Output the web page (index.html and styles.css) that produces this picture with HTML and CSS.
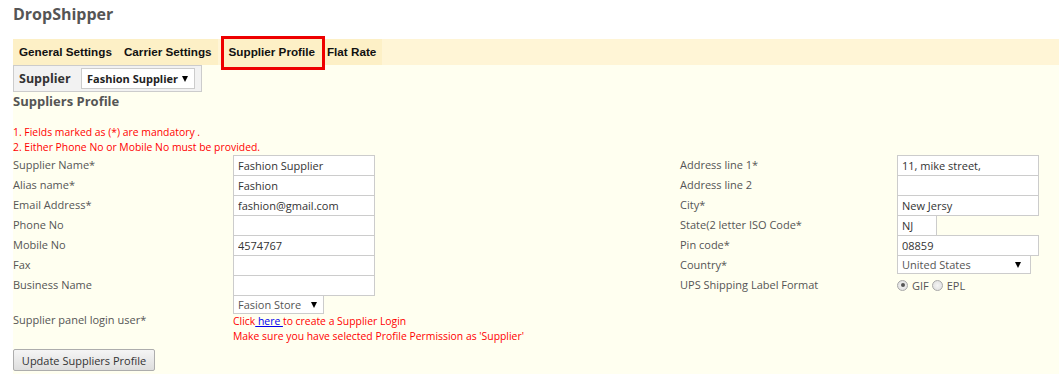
FILE: index.html
```html
<!DOCTYPE html>
<html>
<head>
<meta charset="utf-8">
<link rel="stylesheet" href="styles.css">
</head>
<body>
<div class="page">
  <h1 class="title">DropShipper</h1>
  <div class="tabs">
    <span class="tab">General Settings</span>
    <span class="tab">Carrier Settings</span>
    <span class="tab active">Supplier Profile</span>
    <span class="tab">Flat Rate</span>
  </div>
  <div class="content">
    <div class="supplier-bar">
      <span class="sb-label">Supplier</span>
      <div class="select sb-select"><span>Fashion Supplier</span><i class="caret"></i></div>
    </div>
    <h2 class="heading">Suppliers Profile</h2>
    <div class="notes">
      <p>1. Fields marked as (*) are mandatory .</p>
      <p>2. Either Phone No or Mobile No must be provided.</p>
    </div>
    <div class="form">
      <label class="lbl">Supplier Name*</label>
      <div class="cell"><input class="inp" value="Fashion Supplier"></div>
      <label class="lbl">Address line 1*</label>
      <div class="cell"><input class="inp" value="11, mike street,"></div>

      <label class="lbl">Alias name*</label>
      <div class="cell"><input class="inp" value="Fashion"></div>
      <label class="lbl">Address line 2</label>
      <div class="cell"><input class="inp" value=""></div>

      <label class="lbl">Email Address*</label>
      <div class="cell"><input class="inp" value="fashion@gmail.com"></div>
      <label class="lbl">City*</label>
      <div class="cell"><input class="inp" value="New Jersy"></div>

      <label class="lbl">Phone No</label>
      <div class="cell"><input class="inp" value=""></div>
      <label class="lbl">State(2 letter ISO Code*</label>
      <div class="cell"><input class="inp inp-short" value="NJ"></div>

      <label class="lbl">Mobile No</label>
      <div class="cell"><input class="inp" value="4574767"></div>
      <label class="lbl">Pin code*</label>
      <div class="cell"><input class="inp" value="08859"></div>

      <label class="lbl">Fax</label>
      <div class="cell"><input class="inp" value=""></div>
      <label class="lbl">Country*</label>
      <div class="cell"><div class="select country-select"><span>United States</span><i class="caret"></i></div></div>

      <label class="lbl">Business Name</label>
      <div class="cell"><input class="inp" value=""></div>
      <label class="lbl">UPS Shipping Label Format</label>
      <div class="cell radios">
        <span class="radio checked"></span><span class="radio-text">GIF</span>
        <span class="radio"></span><span class="radio-text">EPL</span>
      </div>

      <label class="lbl login-lbl">Supplier panel login user*</label>
      <div class="cell store-cell"><div class="select store-select"><span>Fasion Store</span><i class="caret"></i></div></div>
      <div class="login-notes">
        <p>Click<a href="#" class="link"> here </a>to create a Supplier Login</p>
        <p>Make sure you have selected Profile Permission as 'Supplier'</p>
      </div>
    </div>
    <button class="btn" type="button">Update Suppliers Profile</button>
  </div>
</div>
</body>
</html>
```

FILE: styles.css
```css
* { box-sizing: border-box; }

body {
  margin: 0;
  background: #ffffff;
  font-family: "Open Sans", "Liberation Sans", sans-serif;
  color: #555555;
}

.page {
  margin: 0 1px 0 13px;
}

.title {
  margin: 0;
  padding-top: 3px;
  height: 39px;
  font-size: 16px;
  line-height: 22px;
  font-weight: 700;
  color: #555555;
}

.tabs {
  position: relative;
  z-index: 1;
  display: flex;
  align-items: flex-start;
  height: 26px;
  background: #fff5d6;
}

.tab {
  height: 26px;
  padding: 0 6px;
  line-height: 26px;
  font-family: "Liberation Sans", Arial, sans-serif;
  font-size: 11.7px;
  font-weight: 700;
  color: #111111;
  background: #fdf0c6;
}

.tab.active {
  position: relative;
  z-index: 2;
  height: 34px;
  margin: -3px -4px 0 3px;
  padding: 0 7px 0 5px;
  border: 3px solid #ee0000;
  line-height: 26px;
}

.content {
  background: #fffff0;
  padding-bottom: 3px;
}

.supplier-bar {
  display: flex;
  align-items: center;
  width: 189px;
  height: 27px;
  padding: 0 6px 0 5px;
  border: 1px solid #cccccc;
  background: #f2f2f2;
}

.sb-label {
  width: 62px;
  font-size: 12.5px;
  font-weight: 700;
  color: #333333;
}

.select {
  display: flex;
  align-items: center;
  justify-content: space-between;
  border: 1px solid #cccccc;
  background: #ffffff;
  font-size: 11px;
  color: #555555;
}

.sb-select {
  width: 114px;
  height: 21px;
  padding: 0 6px 0 5px;
  font-size: 11px;
  font-weight: 700;
  color: #222222;
}

.caret {
  display: block;
  width: 0;
  height: 0;
  border-left: 3.5px solid transparent;
  border-right: 3.5px solid transparent;
  border-top: 6px solid #000000;
}

.heading {
  margin: 0;
  font-size: 13px;
  line-height: 18px;
  font-weight: 700;
  color: #555555;
}

.notes {
  margin-top: 15px;
}

.notes p,
.login-notes p {
  margin: 0;
  font-size: 10.4px;
  line-height: 15px;
  color: #ff0000;
}

.form {
  display: grid;
  grid-template-columns: 220px 447px 217px 1fr;
  grid-template-rows: repeat(7, 20px) 19px 30px;
}

.lbl {
  font-size: 11px;
  line-height: 20px;
  color: #555555;
}

.cell {
  height: 20px;
}

.inp {
  display: block;
  width: 142px;
  height: 21px;
  margin: 0;
  padding: 0 4px;
  border: 1px solid #cccccc;
  background: #ffffff;
  font-family: "Open Sans", "Liberation Sans", sans-serif;
  font-size: 11px;
  color: #333333;
  outline: none;
}

.inp-short {
  width: 40px;
}

.country-select {
  width: 134px;
  height: 19px;
  padding: 0 9px 0 4px;
}

.store-cell {
  grid-column: 2;
  grid-row: 8;
  height: 19px;
}

.store-select {
  width: 91px;
  height: 19px;
  padding: 0 6px 0 4px;
}

.login-lbl {
  grid-column: 1;
  grid-row: 8 / span 2;
  align-self: center;
}

.login-notes {
  grid-column: 2 / span 3;
  grid-row: 9;
}

.link {
  color: #0000ee;
  text-decoration: underline;
}

.radios {
  display: flex;
  align-items: center;
  font-size: 11px;
  color: #555555;
}

.radio {
  width: 11px;
  height: 11px;
  border-radius: 50%;
  border: 1px solid #a8a8a8;
  background: radial-gradient(circle, #f4f4f4 0%, #dcdcdc 100%);
  position: relative;
}

.radio.checked::after {
  content: "";
  position: absolute;
  left: 2.5px;
  top: 2.5px;
  width: 4px;
  height: 4px;
  border-radius: 50%;
  background: #555555;
}

.radio-text {
  margin: 0 3px 0 4px;
}

.btn {
  display: block;
  margin: 5px 0 0 0;
  width: 142px;
  height: 22px;
  padding: 0;
  border: 1px solid #adadad;
  border-radius: 2px;
  background: linear-gradient(#f5f5f5, #dedede);
  font-family: "Open Sans", "Liberation Sans", sans-serif;
  font-size: 11px;
  color: #333333;
}
```
